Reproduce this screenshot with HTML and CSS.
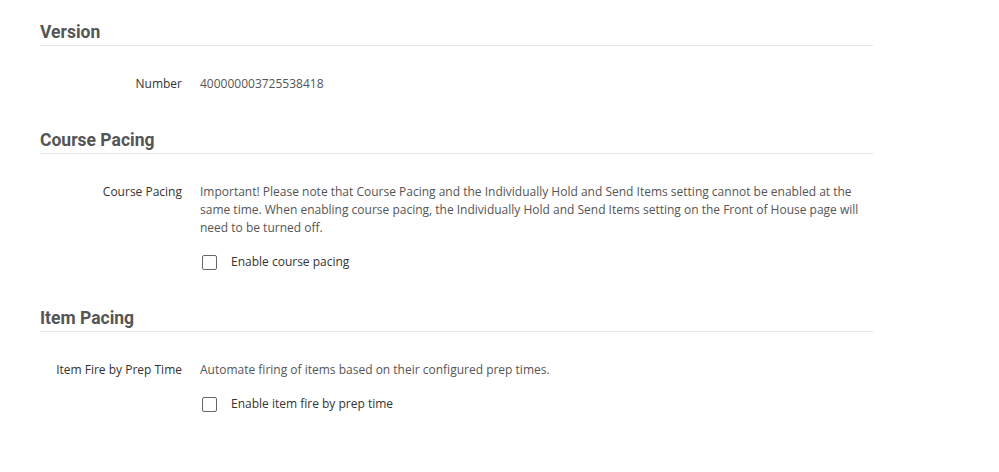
FILE: index.html
```html
<!DOCTYPE html>
<html>
<head>
<meta charset="utf-8">
<link rel="stylesheet" href="styles.css">
</head>
<body>
<div class="page">
  <section class="section">
    <h2 class="section-title">Version</h2>
    <div class="row">
      <div class="label">Number</div>
      <div class="value">400000003725538418</div>
    </div>
  </section>
  <section class="section">
    <h2 class="section-title">Course Pacing</h2>
    <div class="row">
      <div class="label">Course Pacing</div>
      <div class="value">
        <p class="desc">Important! Please note that Course Pacing and the Individually Hold and Send Items setting cannot be enabled at the same time. When enabling course pacing, the Individually Hold and Send Items setting on the Front of House page will need to be turned off.</p>
        <label class="check"><span class="box"></span><span>Enable course pacing</span></label>
      </div>
    </div>
  </section>
  <section class="section">
    <h2 class="section-title">Item Pacing</h2>
    <div class="row">
      <div class="label">Item Fire by Prep Time</div>
      <div class="value">
        <p class="desc">Automate firing of items based on their configured prep times.</p>
        <label class="check"><span class="box"></span><span>Enable item fire by prep time</span></label>
      </div>
    </div>
  </section>
</div>
</body>
</html>
```
FILE: styles.css
```css
* { box-sizing: border-box; }
body {
  margin: 0;
  background: #fff;
  font-family: "Open Sans", Roboto, "Liberation Sans", sans-serif;
  font-size: 12px;
  color: #333;
}
.page {
  width: 833px;
  margin-left: 40px;
  padding-top: 21px;
}
.section { margin-bottom: 36px; }
.section-title {
  margin: 0;
  font-family: Roboto, "Liberation Sans", sans-serif;
  font-size: 17.5px;
  line-height: 22px;
  font-weight: 700;
  color: #555;
  padding-bottom: 2px;
  border-bottom: 1px solid #e3e3e3;
}
.row {
  display: grid;
  grid-template-columns: 142px 1fr;
  column-gap: 18px;
  margin-top: 29px;
  line-height: 18px;
}
.label { text-align: right; color: #333; }
.value { color: #555; }
.desc { margin: 0; }
.check {
  display: flex;
  align-items: center;
  gap: 14px;
  margin-top: 16px;
  padding-left: 2px;
  color: #333;
}
.box {
  width: 15px;
  height: 15px;
  border: 1.5px solid #666;
  border-radius: 2px;
  background: #fff;
}
```
